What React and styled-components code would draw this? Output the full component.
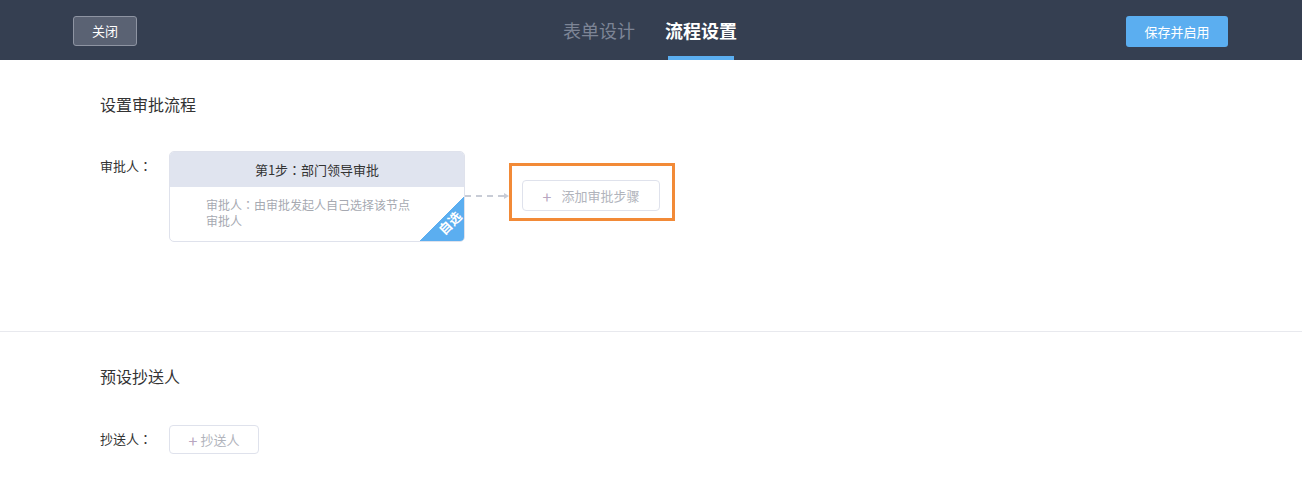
import React from 'react';
import styled, { createGlobalStyle } from 'styled-components';

const GlobalStyle = createGlobalStyle`
  body {
    margin: 0;
    background: #fff;
    font-family: "Microsoft YaHei", "Noto Sans CJK SC", "Liberation Sans", sans-serif;
    color: #333;
  }
`;

const Header = styled.div`
  height: 60px;
  background-color: #353f51;
  display: flex;
  align-items: center;
  justify-content: space-between;
  padding: 0 74px 0 73px;
  position: relative;
`;

const GhostButton = styled.button`
  width: 64px;
  height: 30px;
  border-radius: 3px;
  border: 1px solid #8e94a2;
  background-color: #5a6273;
  color: #fff;
  font-size: 13px;
  font-family: inherit;
  padding: 0;
  margin-top: 1px;
`;

const PrimaryButton = styled.button`
  width: 102px;
  height: 31px;
  border-radius: 3px;
  border: none;
  background-color: #5baef0;
  color: #fff;
  font-size: 13px;
  font-family: inherit;
  padding: 0;
  margin-top: 2px;
`;

const Tabs = styled.div`
  position: absolute;
  left: 563px;
  top: 0;
  height: 60px;
  display: flex;
  gap: 30px;
`;

const Tab = styled.div`
  height: 60px;
  display: flex;
  align-items: center;
  font-size: 18px;
  color: ${p => (p.active ? '#fff' : '#7d8596')};
  font-weight: ${p => (p.active ? 'bold' : 'normal')};
  position: relative;
  padding-bottom: 1px;
  box-sizing: border-box;

  &::after {
    content: '';
    display: ${p => (p.active ? 'block' : 'none')};
    position: absolute;
    left: 3px;
    right: 3px;
    bottom: 0;
    height: 4px;
    background-color: #5baef0;
  }
`;

const Section = styled.div`
  padding: 33px 100px 0;
  height: ${p => p.h}px;
  box-sizing: border-box;
  border-bottom: ${p => (p.line ? '1px solid #e8e9ee' : 'none')};
`;

const Title = styled.div`
  font-size: 16px;
  color: #333;
  line-height: 22px;
`;

const Colon = styled.span`
  font-family: "Noto Sans CJK TC", sans-serif;
`;

const Row = styled.div`
  display: flex;
  align-items: flex-start;
  margin-top: ${p => p.mt}px;
`;

const Label = styled.div`
  width: 69px;
  font-size: 13px;
  color: #333;
  line-height: 18px;
  padding-top: ${p => p.pt}px;
`;

const Card = styled.div`
  width: 296px;
  height: 91px;
  border: 1px solid #dfe2ec;
  border-radius: 5px;
  box-sizing: border-box;
  overflow: hidden;
  position: relative;
  background: #fff;
`;

const CardHead = styled.div`
  height: 35px;
  background-color: #e0e4ef;
  display: flex;
  align-items: center;
  justify-content: center;
  font-size: 13px;
  color: #333;
`;

const CardBody = styled.div`
  padding: 10px 50px 0 36px;
  font-size: 12px;
  line-height: 16px;
  color: #a6a9b1;
`;

const Corner = styled.div`
  position: absolute;
  right: -1px;
  bottom: -1px;
  width: 47px;
  height: 47px;
  background: linear-gradient(135deg, transparent 50%, #5baef0 50%);
`;

const CornerText = styled.span`
  position: absolute;
  right: 2px;
  bottom: 11px;
  color: #fff;
  font-size: 13px;
  line-height: 16px;
  transform: rotate(-45deg);
  font-weight: bold;
`;

const Connector = styled.div`
  width: 44px;
  margin-top: 42px;
  display: flex;
  align-items: center;
`;

const Dash = styled.div`
  flex: 1;
  border-top: 2px dashed #c8ccd6;
`;

const Arrow = styled.div`
  width: 0;
  height: 0;
  border-top: 3px solid transparent;
  border-bottom: 3px solid transparent;
  border-left: 5px solid #c8ccd6;
`;

const Highlight = styled.div`
  margin-top: 12px;
  border: 3px solid #f28a37;
  padding: 14px 12px 7px 10px;
`;

const AddButton = styled.button`
  height: ${p => p.h}px;
  width: ${p => p.w}px;
  border: 1px solid #dfe2ec;
  border-radius: 4px;
  background: #fff;
  color: #b1b4bc;
  font-size: 13px;
  font-family: inherit;
  display: flex;
  align-items: center;
  justify-content: center;
  gap: ${p => p.gap}px;
  padding: 0;
`;

const Plus = styled.span`
  color: #b8a6c0;
  font-size: 16px;
  line-height: 1;
`;

const App = () => {
  return (
    <>
      <GlobalStyle />
      <Header>
        <GhostButton>关闭</GhostButton>
        <Tabs>
          <Tab>表单设计</Tab>
          <Tab active>流程设置</Tab>
        </Tabs>
        <PrimaryButton>保存并启用</PrimaryButton>
      </Header>

      <Section h={272} line>
        <Title>设置审批流程</Title>
        <Row mt={36}>
          <Label pt={6}>审批人<Colon>：</Colon></Label>
          <Card>
            <CardHead>第1步<Colon>：</Colon>部门领导审批</CardHead>
            <CardBody>
              审批人<Colon>：</Colon>由审批发起人自己选择该节点审批人
            </CardBody>
            <Corner>
              <CornerText>自选</CornerText>
            </Corner>
          </Card>
          <Connector>
            <Dash />
            <Arrow />
          </Connector>
          <Highlight>
            <AddButton w={138} h={31} gap={10}>
              <Plus>+</Plus>添加审批步骤
            </AddButton>
          </Highlight>
        </Row>
      </Section>

      <Section h={145}>
        <Title>预设抄送人</Title>
        <Row mt={38}>
          <Label pt={5}>抄送人<Colon>：</Colon></Label>
          <AddButton w={90} h={29} gap={3}>
            <Plus>+</Plus>抄送人
          </AddButton>
        </Row>
      </Section>
    </>
  );
};

export default App;
